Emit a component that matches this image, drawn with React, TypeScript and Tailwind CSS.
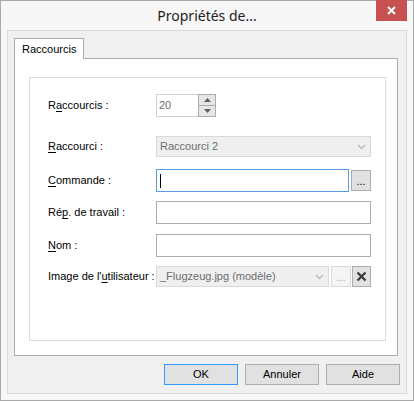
import type { ReactNode } from "react";

const ui = { fontFamily: '"Liberation Sans", Arial, sans-serif' };

function Label({ children }: { children: ReactNode }) {
  return (
    <div className="w-[108px] shrink-0 text-[11px] leading-none text-black">
      {children}
    </div>
  );
}

function Key({ children }: { children: ReactNode }) {
  return <span className="underline underline-offset-[2px]">{children}</span>;
}

function Chevron() {
  return (
    <svg width="9" height="6" viewBox="0 0 9 6" className="shrink-0">
      <polyline
        points="1,1 4.5,4.5 8,1"
        fill="none"
        stroke="#b8b8b8"
        strokeWidth="1.4"
      />
    </svg>
  );
}

function DisabledCombo({ text, width }: { text: string; width: string }) {
  return (
    <div
      className={`${width} h-[21px] flex items-center justify-between border border-[#d9d9d9] bg-[#efefef] pl-[3px] pr-[4px] text-[11px] text-[#6d6d6d]`}
    >
      <span>{text}</span>
      <Chevron />
    </div>
  );
}

function TextBox({ focused = false, width = "w-[215px]" }: { focused?: boolean; width?: string }) {
  return (
    <div
      className={`${width} h-[23px] flex items-center bg-white pl-[3px] border ${
        focused ? "border-[#569de5]" : "border-[#acacac]"
      }`}
    >
      {focused && <div className="w-px h-[14px] bg-black" />}
    </div>
  );
}

function DotsButton({ disabled = false }: { disabled?: boolean }) {
  return (
    <div
      className={`w-[20px] h-[21px] flex items-end justify-center pb-[3px] border text-[11px] leading-none ${
        disabled
          ? "border-[#d9d9d9] bg-[#f4f4f4] text-[#a0a0a0]"
          : "border-[#adadad] bg-[#e1e1e1] text-black"
      }`}
    >
      ...
    </div>
  );
}

function SpinBox() {
  return (
    <div className="flex h-[23px]">
      <div className="w-[42px] h-full flex items-center border border-r-0 border-[#d0d0d0] bg-white pl-[2px] text-[11px] text-[#6d6d6d]">
        20
      </div>
      <div className="w-[18px] flex flex-col">
        <div className="h-[12px] flex items-center justify-center border border-[#acacac] bg-[#e6e6e6]">
          <svg width="7" height="4" viewBox="0 0 7 4">
            <polygon points="0,4 3.5,0 7,4" fill="#606060" />
          </svg>
        </div>
        <div className="h-[12px] -mt-px flex items-center justify-center border border-[#acacac] bg-[#e6e6e6]">
          <svg width="7" height="4" viewBox="0 0 7 4">
            <polygon points="0,0 3.5,4 7,0" fill="#606060" />
          </svg>
        </div>
      </div>
    </div>
  );
}

function DialogButton({ label, primary = false }: { label: string; primary?: boolean }) {
  return (
    <div
      className={`w-[74px] h-[21px] flex items-center justify-center border bg-[#e1e1e1] text-[11px] text-black ${
        primary ? "border-[#3399ff]" : "border-[#adadad]"
      }`}
    >
      {label}
    </div>
  );
}

export default function App() {
  return (
    <div
      className="w-[414px] h-[401px] flex flex-col border border-[#aaaaaa] bg-[#f7f7f7]"
      style={ui}
    >
      {/* title bar */}
      <div className="relative h-[29px] flex items-center justify-center">
        <span
          className="text-[14px] text-[#222222]"
          style={{ fontFamily: '"Noto Sans", sans-serif' }}
        >
          Propriétés de...
        </span>
        <div className="absolute -top-px right-[6px] w-[31px] h-[21px] flex items-center justify-center bg-[#c75050]">
          <svg width="9" height="9" viewBox="0 0 9 9">
            <path d="M1 1 L8 8 M8 1 L1 8" stroke="#ffffff" strokeWidth="2" />
          </svg>
        </div>
      </div>

      {/* client area */}
      <div className="flex-1 mx-[6px] mb-[6px] flex flex-col border border-[#dadada] bg-[#f0f0f0] px-[6px] pt-[7px] pb-[8px]">
        <div className="flex">
          <div className="relative z-10 -mb-px w-[70px] h-[21px] flex items-center pl-[7px] border border-b-0 border-[#acacac] bg-white text-[11px] text-black">
            Raccourcis
          </div>
        </div>

        <div className="flex-1 mr-[2px] flex flex-col border border-[#acacac] bg-white pl-[14px] pt-[18px] pr-[11px] pb-[14px]">
          <div className="flex-1 flex flex-col border border-[#dcdcdc] pl-[18px] pr-[14px]">
            <div className="mt-[16px] flex items-center">
              <Label>
                R<Key>a</Key>ccourcis :
              </Label>
              <SpinBox />
            </div>

            <div className="mt-[19px] flex items-center">
              <Label>
                <Key>R</Key>accourci :
              </Label>
              <DisabledCombo text="Raccourci 2" width="w-[215px]" />
            </div>

            <div className="mt-[12px] flex items-center">
              <Label>
                <Key>C</Key>ommande :
              </Label>
              <TextBox focused width="w-[193px]" />
              <div className="ml-[2px]">
                <DotsButton />
              </div>
            </div>

            <div className="mt-[9px] flex items-center">
              <Label>
                Ré<Key>p</Key>. de travail :
              </Label>
              <TextBox />
            </div>

            <div className="mt-[10px] flex items-center">
              <Label>
                <Key>N</Key>om :
              </Label>
              <TextBox />
            </div>

            <div className="mt-[9px] flex items-center">
              <Label>
                Image de l'<Key>u</Key>tilisateur :
              </Label>
              <DisabledCombo text="_Flugzeug.jpg (modèle)" width="w-[173px]" />
              <div className="ml-[2px]">
                <DotsButton disabled />
              </div>
              <div className="ml-px w-[19px] h-[21px] flex items-center justify-center border border-[#adadad] bg-[#e1e1e1]">
                <svg width="11" height="11" viewBox="0 0 11 11">
                  <path d="M1.5 1.5 L9.5 9.5 M9.5 1.5 L1.5 9.5" stroke="#3c3c3c" strokeWidth="2.4" />
                </svg>
              </div>
            </div>
          </div>
        </div>

        <div className="mt-[8px] flex justify-end gap-[7px]">
          <DialogButton label="OK" primary />
          <DialogButton label="Annuler" />
          <DialogButton label="Aide" />
        </div>
      </div>
    </div>
  );
}
